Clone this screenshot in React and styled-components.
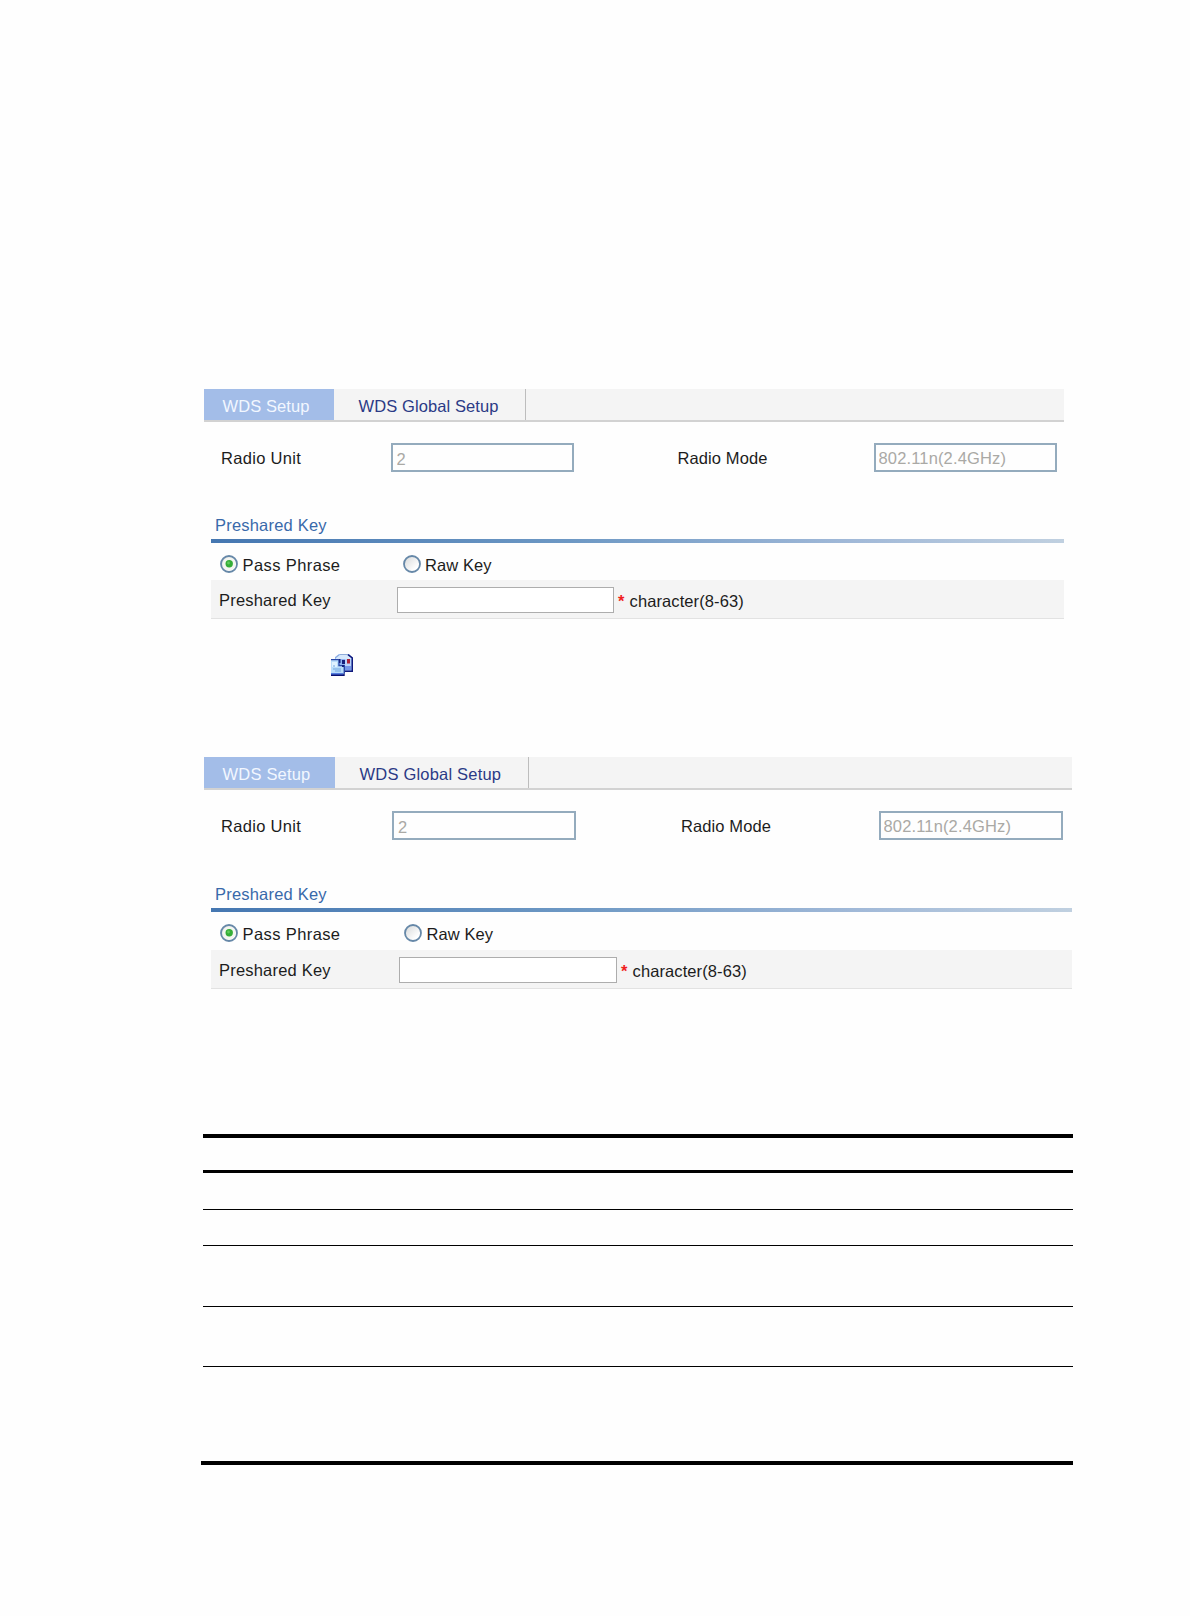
import React from 'react'
import styled, { createGlobalStyle, ThemeProvider } from 'styled-components'

const GlobalStyle = createGlobalStyle`
  body {
    margin: 0;
    background-color: #fefefe;
  }
`

const Page = styled.main`
  box-sizing: border-box;
  width: 1190px;
  height: 1616px;
  padding: 389px 0 0 204px;
  font-family: 'Liberation Sans', Arial, sans-serif;
  font-size: 16.5px;
  line-height: 20px;
  color: #1c1c1c;
  overflow: hidden;
`

const PanelStyled = styled.section`
  width: ${({ theme }) => theme.width}px;
  height: 231px;
`

const Tabs = styled.nav`
  display: flex;
  box-sizing: border-box;
  height: 33px;
  background-color: #f4f4f4;
  border-bottom: 2px solid #d2d2d2;
`

const Tab = styled.div`
  box-sizing: border-box;
  width: ${({ theme, $active }) => ($active ? theme.tab : theme.globalTab)}px;
  padding: 7px 0 0 ${({ $active }) => ($active ? '18.5px' : '24.5px')};
  white-space: nowrap;
  letter-spacing: ${({ theme }) => theme.tabSpacing}px;
  color: ${({ $active }) => ($active ? '#f2f7ff' : '#2b3a86')};
  background-color: ${({ $active }) => ($active ? '#a3bde8' : 'transparent')};
  border-right: ${({ $active }) => ($active ? '0' : '1px solid #bdbdbd')};
`

const Fields = styled.div`
  display: flex;
  height: ${({ theme }) => theme.fieldsHeight}px;
  padding: 21px 0 0 17px;
  box-sizing: border-box;
`

const FieldLabel = styled.label`
  width: ${({ $width }) => $width}px;
  padding-top: 5px;
  white-space: nowrap;
  letter-spacing: ${({ $spacing }) => $spacing || 0.1}px;
`

const Value = styled.input`
  box-sizing: border-box;
  width: ${({ theme }) => theme.field}px;
  height: 29px;
  margin: 0 ${({ theme, $first }) => ($first ? theme.fieldGap : 0)}px 0 0;
  padding: ${({ $first }) => ($first ? '3px' : '2px')} 0 0 ${({ $first }) => ($first ? '4px' : '3px')};
  border: 2px solid #94abbd;
  border-radius: 0;
  background-color: #fefefe;
  font: inherit;
  letter-spacing: 0.15px;
  color: #aaa9a5;
`

const KeySection = styled.div`
  margin-left: 7px;
`

const Heading = styled.h2`
  margin: 0;
  height: 36px;
  box-sizing: border-box;
  padding: 12px 0 0 4px;
  font-size: 16.5px;
  font-weight: normal;
  letter-spacing: 0.2px;
  color: #3969aa;
`

const Rule = styled.div`
  height: 4px;
  background: linear-gradient(to right, #4577b1 0%, #6d98c4 42%, #a1b9d8 75%, #c0d0e0 100%);
`

const Radios = styled.div`
  display: flex;
  height: ${({ theme }) => theme.radiosHeight}px;
  padding: 12px 0 0 9px;
  box-sizing: border-box;
`

const RadioOption = styled.label`
  display: flex;
  width: ${({ $width }) => $width}px;
  gap: 4.5px;
  letter-spacing: ${({ $spacing }) => $spacing || 0.1}px;
  white-space: nowrap;
  svg {
    flex: none;
  }
`

const KeyRow = styled.div`
  display: flex;
  box-sizing: border-box;
  height: 39px;
  padding: 7px 0 0 8px;
  background-color: #f4f4f4;
  border-bottom: 1px solid #e2e2e2;
`

const KeyLabel = styled.label`
  width: ${({ theme }) => theme.keyLabel}px;
  padding-top: 3px;
  letter-spacing: 0.2px;
`

const KeyInput = styled.input`
  box-sizing: border-box;
  width: ${({ theme }) => theme.keyInput}px;
  height: 26px;
  margin: 0;
  border: 1.5px solid #adadad;
  background-color: #fff;
`

const Hint = styled.span`
  display: flex;
  padding: 4px 0 0 4px;
  gap: 5px;
  letter-spacing: 0.1px;
  b {
    color: #f01f1f;
  }
`

const IconRow = styled.div`
  height: 137px;
  padding-left: 127px;
  box-sizing: border-box;
  svg {
    display: block;
    padding-top: 34px;
  }
`

const Table = styled.div`
  width: 870px;
  margin: 146px 0 0 -1px;
`

const Row = styled.div`
  box-sizing: border-box;
  height: ${({ $height }) => $height}px;
  border-bottom: ${({ $line }) => $line || 1}px solid #000;
  border-top: ${({ $top }) => $top || 0}px solid #000;
  margin-left: ${({ $wide }) => ($wide ? '-2px' : '0')};
`

function RadioIcon({ checked }) {
  const id = checked ? 'radio-on' : 'radio-off'
  return (
    <svg width="18" height="18" viewBox="0 0 18 18">
      <defs>
        <linearGradient id={id} x1="0" y1="0" x2="1" y2="1">
          <stop offset="0" stopColor="#d5d7d8" />
          <stop offset="0.75" stopColor="#ffffff" />
        </linearGradient>
      </defs>
      <circle cx="9" cy="9" r="8" fill={`url(#${id})`} stroke="#6688a8" strokeWidth="1.8" />
      {checked && <circle cx="9" cy="9" r="6.4" fill="#f4f6f1" />}
      {checked && <circle cx="9.2" cy="8.8" r="3.7" fill="#35ae38" />}
      {checked && <circle cx="8.5" cy="8" r="1.4" fill="#62cb5c" />}
    </svg>
  )
}

function MailIcon() {
  return (
    <svg width="22" height="22" viewBox="0 0 22 22">
      <path d="M4 5V3L8 0H18L22 4V18H12V8Z" fill="#9abcf4" />
      <path d="M5 4L9 1H17L20 4V5H5Z" fill="#d6e8fc" />
      <path d="M4 4L8 1M9 .5H17" stroke="#8fabd9" fill="none" />
      <path d="M17 .7L21.3 4V17.3H13" stroke="#10197c" strokeWidth="1.5" fill="none" />
      <path d="M14 5H20V16H14Z" fill="#b9d3fa" />
      <path d="M14 12H20V16H14Z" fill="#7697e8" />
      <path d="M16 5H19V9.5H16Z" fill="#ae2339" />
      <path d="M0 6H14V20H12V22H0Z" fill="#b9ddfa" />
      <path d="M0 5.6H8V11.5H13.3V19.5" stroke="#2948a8" strokeWidth="1.4" fill="none" />
      <path d="M9 5H14V11H9Z" fill="#90b2f0" />
      <path d="M1 8H6V13H1Z" fill="#dff2ff" />
      <path d="M8 5H9.5V9H8ZM11 6H14V10H11ZM11 11H13V13H11Z" fill="#14207d" />
      <path d="M2 12H4M2 15H10M4 17H10" stroke="#73a5df" fill="none" />
      <path d="M0 19H12V21H0Z" fill="#547de0" />
      <path d="M0 21.3H13V19.5" stroke="#091172" strokeWidth="1.4" fill="none" />
    </svg>
  )
}

const newSetup = {
  width: 860,
  tab: 130,
  globalTab: 192,
  tabSpacing: 0.1,
  fieldsHeight: 81,
  radiosHeight: 37,
  unitLabel: 169.5,
  field: 183,
  fieldGap: 104,
  modeLabel: 196,
  radio: 182.5,
  keyLabel: 178,
  keyInput: 217,
}

const editSetup = {
  width: 867.5,
  tab: 131,
  globalTab: 193.5,
  tabSpacing: 0.2,
  fieldsHeight: 82,
  radiosHeight: 38,
  unitLabel: 171,
  field: 184,
  fieldGap: 105,
  modeLabel: 197.5,
  radio: 184,
  keyLabel: 180,
  keyInput: 218,
}

function Panel({ theme }) {
  return (
    <ThemeProvider theme={theme}>
      <PanelStyled>
        <Tabs>
          <Tab $active>WDS Setup</Tab>
          <Tab>WDS Global Setup</Tab>
        </Tabs>
        <Fields>
          <FieldLabel $width={theme.unitLabel} $spacing={0.3}>Radio Unit</FieldLabel>
          <Value $first value="2" disabled />
          <FieldLabel $width={theme.modeLabel}>Radio Mode</FieldLabel>
          <Value value="802.11n(2.4GHz)" disabled />
        </Fields>
        <KeySection>
          <Heading>Preshared Key</Heading>
          <Rule />
          <Radios>
            <RadioOption $width={theme.radio} $spacing={0.4}>
              <RadioIcon checked />
              Pass Phrase
            </RadioOption>
            <RadioOption>
              <RadioIcon />
              Raw Key
            </RadioOption>
          </Radios>
          <KeyRow>
            <KeyLabel>Preshared Key</KeyLabel>
            <KeyInput />
            <Hint><b>*</b> character(8-63)</Hint>
          </KeyRow>
        </KeySection>
      </PanelStyled>
    </ThemeProvider>
  )
}

function App() {
  return (
    <>
      <GlobalStyle />
      <Page>
        <Panel theme={newSetup} />
        <IconRow>
          <MailIcon />
        </IconRow>
        <Panel theme={editSetup} />
        <Table>
          <Row $height={39} $top={4} $line={3} />
          <Row $height={37} />
          <Row $height={36} />
          <Row $height={61} />
          <Row $height={60} />
          <Row $height={98} $line={4} $wide />
        </Table>
      </Page>
    </>
  )
}

export default App
